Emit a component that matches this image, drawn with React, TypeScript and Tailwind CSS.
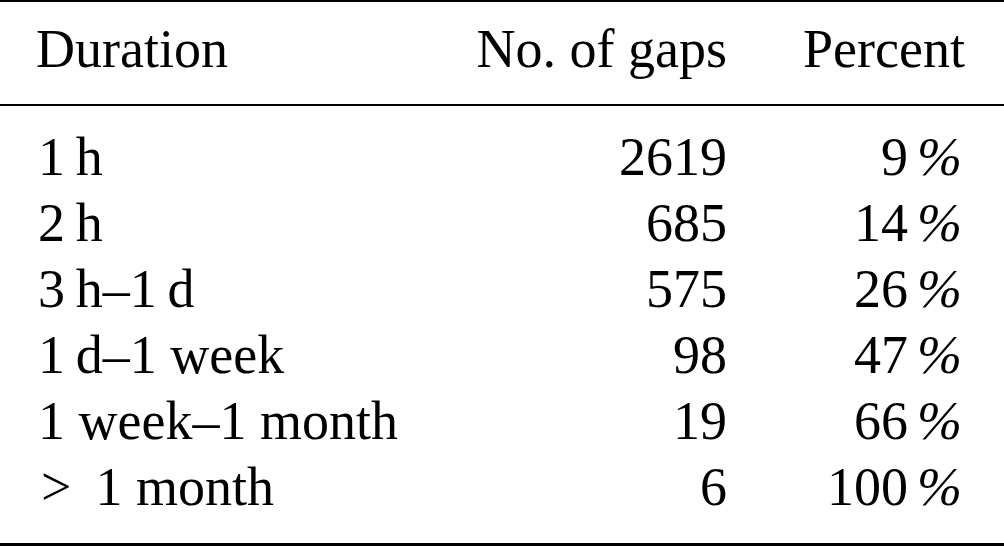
const rows: [string, string, string][] = [
  ['1\u2009h', '2619', '9'],
  ['2\u2009h', '685', '14'],
  ['3\u2009h\u20131\u2009d', '575', '26'],
  ['1\u2009d\u20131 week', '98', '47'],
  ['1 week\u20131 month', '19', '66'],
  ['> 1 month', '6', '100'],
]

function Duration({ text }: { text: string }) {
  // math-mode ">" gets wider spacing than a plain space
  if (text.startsWith('>')) {
    return (
      <div className="whitespace-pre">
        <span className="ml-[5px]">&gt;</span>
        <span className="ml-[24px]">{text.slice(2)}</span>
      </div>
    )
  }
  return <div className="whitespace-pre pl-[2px]">{text}</div>
}

export default function App() {
  return (
    <div className="w-[1004px] bg-white text-black font-['Liberation_Serif','Times_New_Roman',serif] text-[54px] leading-[66px]">
      <div className="h-[2px] bg-black" />
      <div className="grid grid-cols-[1fr_auto_238px] pl-[36px] pr-[39px] pt-[14px] pb-[22px]">
        <div>Duration</div>
        <div className="text-right">No. of gaps</div>
        <div className="text-right">Percent</div>
      </div>
      <div className="h-[2px] bg-black" />
      <div className="grid grid-cols-[1fr_auto_238px] pl-[36px] pr-[39px] pt-[18px] pb-[23px]">
        {rows.map(([dur, gaps, pct]) => (
          <div key={dur} className="contents">
            <Duration text={dur} />
            <div className="text-right">{gaps}</div>
            <div className="text-right pr-[3px]">
              {pct}
              <span className="ml-[9px] italic">%</span>
            </div>
          </div>
        ))}
      </div>
      <div className="h-[3px] bg-black" />
    </div>
  )
}
